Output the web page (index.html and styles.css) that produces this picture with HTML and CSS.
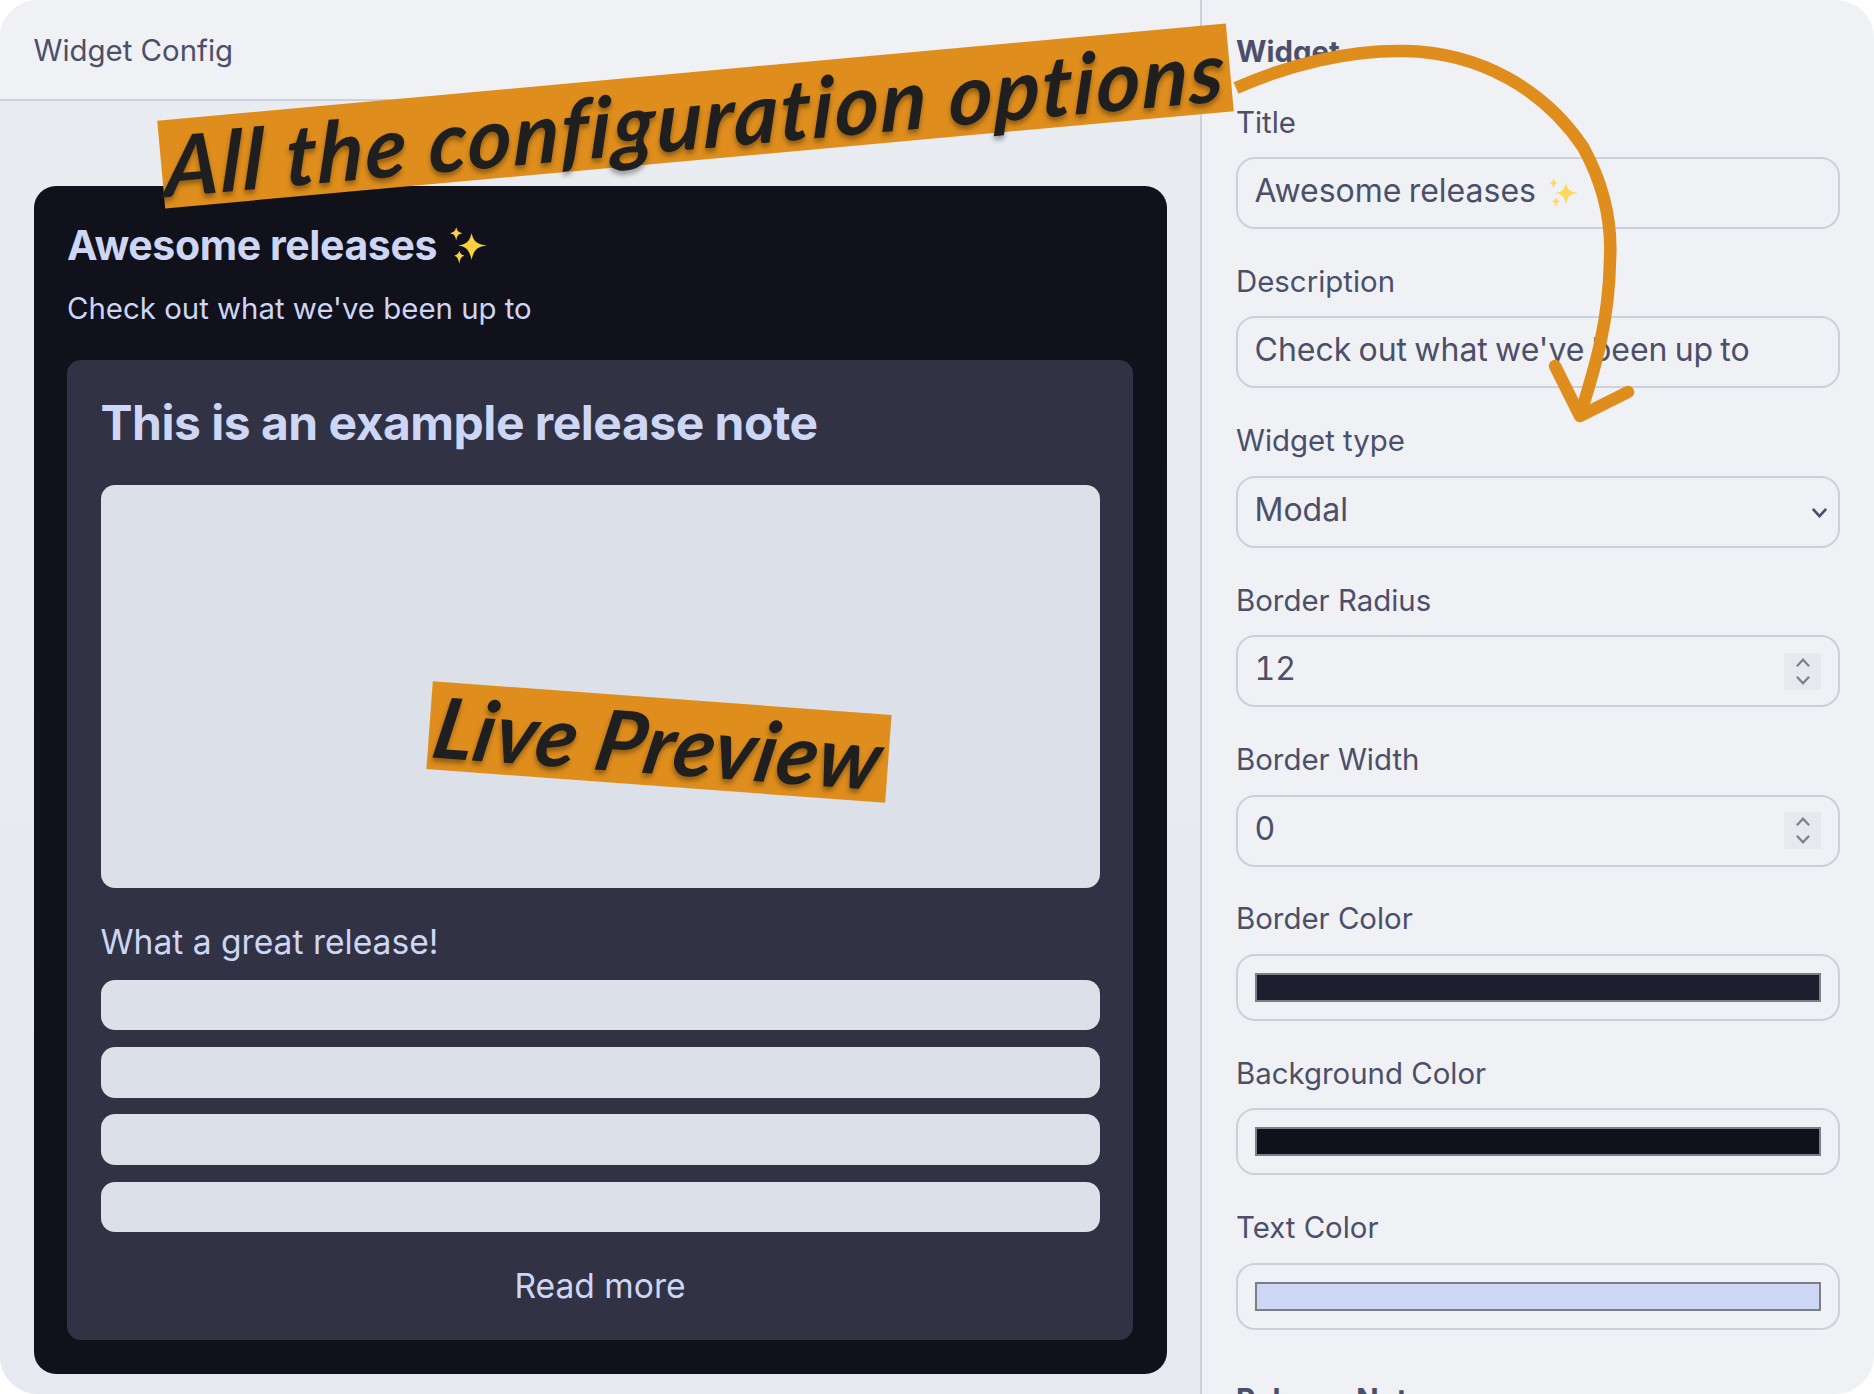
FILE: index.html
```html
<!DOCTYPE html>
<html lang="en">
<head>
<meta charset="utf-8">
<title>Widget Config</title>
<link rel="stylesheet" href="styles.css">
</head>
<body>
<div class="frame">
  <main class="preview-pane">
    <header class="pane-header">Widget Config</header>
    <div class="pane-body">
      <section class="widget">
        <h2 class="widget-title">Awesome releases
          <svg class="sparkle sparkle-title" viewBox="0 0 40 36" aria-hidden="true"><path class="spark-main" d="M23 6 C25 14 28 17 38 18 C28 19 25 23 23 32 C21 23 18 19 10 18 C18 17 21 14 23 6Z"/><path class="spark-main" d="M8 0 C9 4 10 5 14 6 C10 7 9 8 8 13 C7 8 6 7 2 6 C6 5 7 4 8 0Z"/><path class="spark-main" d="M11 23 C12 26 13 27 16 28 C13 29 12 30 11 36 C10 30 9 29 6 28 C9 27 10 26 11 23Z"/></svg>
        </h2>
        <p class="widget-desc">Check out what we've been up to</p>
        <article class="note">
          <h3 class="note-title">This is an example release note</h3>
          <div class="note-image"></div>
          <p class="note-text">What a great release!</p>
          <div class="note-bars">
            <div class="note-bar"></div>
            <div class="note-bar"></div>
            <div class="note-bar"></div>
            <div class="note-bar"></div>
          </div>
          <div class="note-more">Read more</div>
        </article>
      </section>
    </div>
  </main>

  <aside class="config-pane">
    <h4 class="section-title">Widget</h4>
    <div class="fields">
      <div class="field">
        <div class="field-label">Title</div>
        <div class="control">Awesome releases
          <svg class="sparkle sparkle-input" viewBox="0 0 40 36" aria-hidden="true"><path class="spark-pale" d="M23 6 C25 14 28 17 38 18 C28 19 25 23 23 32 C21 23 18 19 10 18 C18 17 21 14 23 6Z"/><path class="spark-pale" d="M8 0 C9 4 10 5 14 6 C10 7 9 8 8 13 C7 8 6 7 2 6 C6 5 7 4 8 0Z"/><path class="spark-pale" d="M11 23 C12 26 13 27 16 28 C13 29 12 30 11 36 C10 30 9 29 6 28 C9 27 10 26 11 23Z"/></svg>
        </div>
      </div>
      <div class="field">
        <div class="field-label">Description</div>
        <div class="control">Check out what we've been up to</div>
      </div>
      <div class="field">
        <div class="field-label">Widget type</div>
        <div class="control control-select">Modal
          <svg class="chevron" viewBox="0 0 14 9" aria-hidden="true"><path d="M1.5 1.5 7 7.5 12.5 1.5"/></svg>
        </div>
      </div>
      <div class="field">
        <div class="field-label">Border Radius</div>
        <div class="control control-number">12
          <span class="spinner" aria-hidden="true">
            <svg viewBox="0 0 14 9"><path d="M1.5 7.5 7 1.5 12.5 7.5"/></svg>
            <svg viewBox="0 0 14 9"><path d="M1.5 1.5 7 7.5 12.5 1.5"/></svg>
          </span>
        </div>
      </div>
      <div class="field">
        <div class="field-label">Border Width</div>
        <div class="control control-number">0
          <span class="spinner" aria-hidden="true">
            <svg viewBox="0 0 14 9"><path d="M1.5 7.5 7 1.5 12.5 7.5"/></svg>
            <svg viewBox="0 0 14 9"><path d="M1.5 1.5 7 7.5 12.5 1.5"/></svg>
          </span>
        </div>
      </div>
      <div class="field">
        <div class="field-label">Border Color</div>
        <div class="control control-color"><div class="swatch swatch-border"></div></div>
      </div>
      <div class="field">
        <div class="field-label">Background Color</div>
        <div class="control control-color"><div class="swatch swatch-bg"></div></div>
      </div>
      <div class="field">
        <div class="field-label">Text Color</div>
        <div class="control control-color"><div class="swatch swatch-text"></div></div>
      </div>
    </div>
    <h4 class="section-title section-notes">Release Notes</h4>
  </aside>

  <div class="tape tape-config"><span class="tape-text">All the configuration options</span></div>
  <div class="tape tape-preview"><span class="tape-text">Live Preview</span></div>
  <svg class="arrow" viewBox="0 0 1874 1394" aria-hidden="true">
    <path class="arrow-line" d="M1236 88 C1290 64 1350 50 1404 51 C1480 52 1545 90 1583 147 C1604 185 1612 225 1610 260 C1609 320 1596 365 1581 412"/>
    <path class="arrow-head" d="M1555 366 L1580 416 L1628 392"/>
  </svg>
</div>
</body>
</html>
```
FILE: styles.css
```css
* { box-sizing: border-box; }
html, body { margin: 0; padding: 0; background: #fff; }
body { width: 1874px; height: 1394px; overflow: hidden; font-family: Inter, "Liberation Sans", sans-serif; color: #4c4f69; }

.frame { position: relative; display: flex; width: 1874px; height: 1394px; overflow: hidden; border-radius: 38px; background: #eff1f5; }

.preview-pane { display: flex; flex-direction: column; width: 1202px; flex: none; border-right: 2px solid #ccd0da; background: #e6e9ef; }
.pane-header { display: flex; align-items: center; height: 101px; flex: none; padding-left: 33.5px; padding-top: 1px; background: #eff1f5; border-bottom: 2px solid #ccd0da; font-size: 29.4px; }
.pane-body { flex: 1; padding: 85px 33px 22px 34px; background: linear-gradient(#e9ecf1, #e6e9ef); }

.widget { display: flex; flex-direction: column; height: 100%; padding: 39px 34px 34px 33px; border-radius: 22px; background: #11111b; color: #cdd6f4; }
.widget-title { display: flex; align-items: center; gap: 11px; margin: 0 0 27.5px; font-size: 41px; line-height: 40px; font-weight: 700; letter-spacing: -0.4px; }
.widget-desc { margin: 0 0 35px; font-size: 29.4px; line-height: 32px; }
.sparkle { display: block; flex: none; }
.sparkle-title { width: 41px; height: 37px; }
.spark-main { fill: #fbcf3f; }
.spark-pale { fill: #fdd95f; }

.note { flex: 1; padding: 38.5px 33.5px 36px; border-radius: 14px; background: #313244; }
.note-title { margin: 0 0 36.5px; font-size: 48px; line-height: 50px; font-weight: 700; letter-spacing: -0.5px; }
.note-image { height: 403px; border-radius: 14px; background: #dce0e8; }
.note-text { margin: 37.5px 0 21px; font-size: 33.6px; line-height: 34px; }
.note-bars { display: flex; flex-direction: column; gap: 16.8px; }
.note-bar { height: 50.4px; border-radius: 14px; background: #dce0e8; }
.note-more { margin-top: 36px; font-size: 33.6px; line-height: 36px; text-align: center; }

.config-pane { flex: 1; padding: 37px 34px 0 34px; }
.section-title { margin: 0; font-size: 29.4px; line-height: 30px; font-weight: 700; }
.fields { display: flex; flex-direction: column; gap: 37.9px; margin-top: 40.5px; }
.section-notes { margin-top: 55px; }
.field-label { margin-bottom: 19.5px; font-size: 29.4px; line-height: 30px; }
.control { display: flex; align-items: center; gap: 10px; height: 72px; padding: 0 16.5px 5px; border: 2px solid #ccd0da; border-radius: 19px; font-size: 32px; word-spacing: -1.8px; }

.control-select { justify-content: space-between; padding-right: 10px; }
.chevron { display: block; width: 17px; height: 11px; margin-top: 6px; }
.chevron path { fill: none; stroke: #4c4f69; stroke-width: 2.2; }

.control-number { justify-content: space-between; padding-right: 17px; padding-bottom: 5px; font-variant-numeric: tabular-nums; }
.spinner { display: flex; flex-direction: column; align-items: center; justify-content: center; gap: 7px; width: 37px; height: 37px; margin-top: 5px; background: #e7e9ee; }
.spinner svg { display: block; width: 16px; height: 10px; }
.spinner path { fill: none; stroke: #7d8092; stroke-width: 2; }

.control-color { height: 67px; padding: 0 17px; }
.swatch { width: 100%; height: 29px; border: 2px solid #7b7e86; }
.swatch-border { background: #1e1e2e; }
.swatch-bg { background: #11111b; }
.swatch-text { background: #cdd6f4; }

.sparkle-input { width: 33px; height: 30px; margin: 4px 0 0 1px; }

.tape { position: absolute; display: flex; align-items: center; justify-content: center; background: #df8e1d; color: #1f1f1f; font-family: Lato, sans-serif; font-style: italic; font-weight: 700; white-space: nowrap; text-shadow: 0 4px 5px rgba(0, 0, 0, .35); }
.tape-text { display: block; transform: skewX(-7deg); }
.tape-config { left: 159px; top: 72px; width: 1073px; height: 88px; transform: rotate(-5.2deg); font-size: 84px; letter-spacing: 2.1px; }
.tape-preview { left: 429px; top: 698px; width: 460px; height: 87.5px; transform: rotate(4.2deg); font-size: 84px; letter-spacing: 0.5px; }

.arrow { position: absolute; inset: 0; width: 1874px; height: 1394px; pointer-events: none; }
.arrow-line { fill: none; stroke: #df8e1d; stroke-width: 12.5; }
.arrow-head { fill: none; stroke: #df8e1d; stroke-width: 12.5; stroke-linecap: round; stroke-linejoin: round; }
```
